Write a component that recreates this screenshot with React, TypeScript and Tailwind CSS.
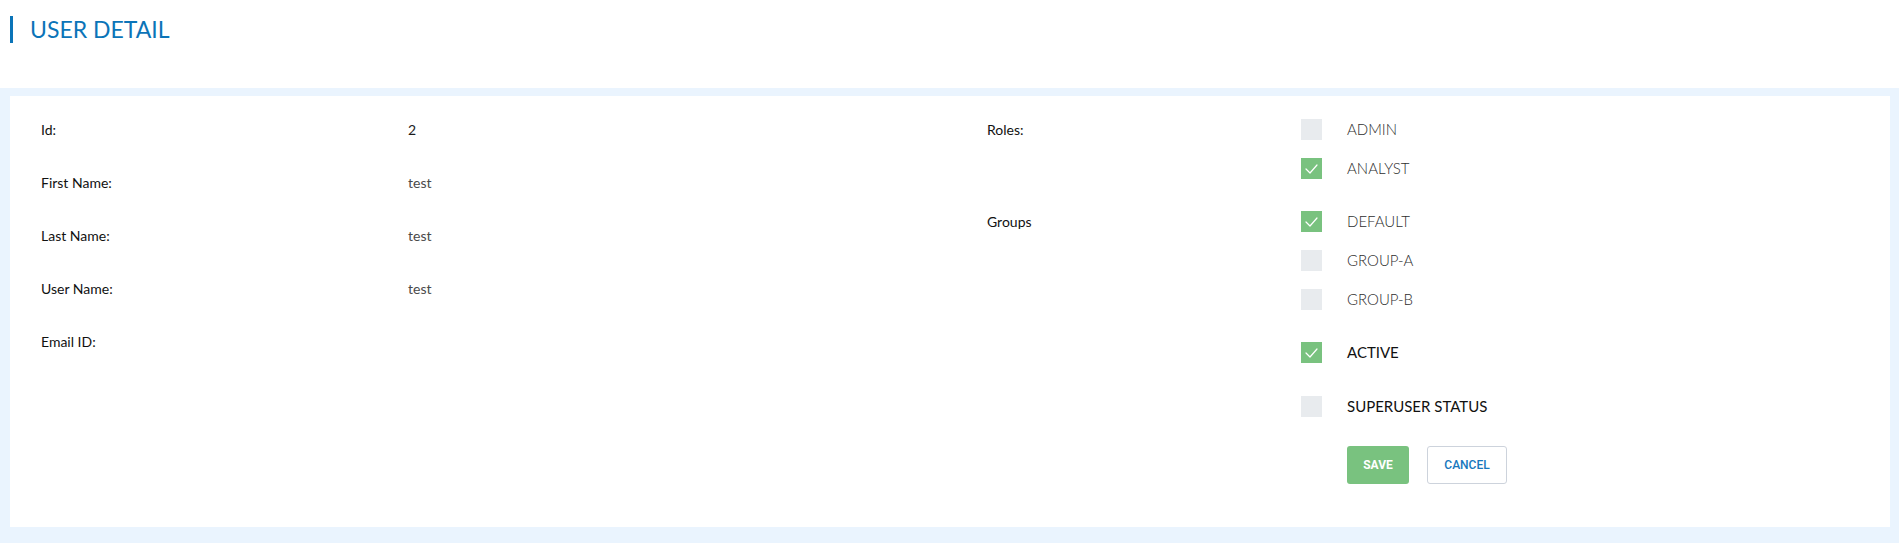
import React from 'react';

type Option = { label: string; checked: boolean };

const roles: Option[] = [
  { label: 'ADMIN', checked: false },
  { label: 'ANALYST', checked: true },
];

const groups: Option[] = [
  { label: 'DEFAULT', checked: true },
  { label: 'GROUP-A', checked: false },
  { label: 'GROUP-B', checked: false },
];

const fields = [
  { label: 'Id:', value: '2', dark: true },
  { label: 'First Name:', value: 'test' },
  { label: 'Last Name:', value: 'test' },
  { label: 'User Name:', value: 'test' },
  { label: 'Email ID:', value: '' },
];

const Box: React.FC<{ checked: boolean }> = ({ checked }) => (
  <span
    className={
      checked
        ? 'w-[21px] h-[21px] bg-[#79c27f] flex items-center justify-center shrink-0'
        : 'w-[21px] h-[21px] bg-[#e8ebee] shrink-0'
    }
  >
    {checked && (
      <svg width="21" height="21" viewBox="0 0 21 21" fill="none">
        <polyline points="5,11 9,15 16,7" stroke="#fff" strokeWidth="1.2" strokeLinecap="round" strokeLinejoin="round" />
      </svg>
    )}
  </span>
);

const CheckRow: React.FC<{ opt: Option; strong?: boolean }> = ({ opt, strong }) => (
  <div className="flex items-center h-[21px]">
    <Box checked={opt.checked} />
    <span
      className={
        strong
          ? 'ml-[25px] text-[15px] font-normal text-[#111] leading-none'
          : 'ml-[25px] text-[15px] font-light text-[#2e2e2e] leading-none'
      }
    >
      {opt.label}
    </span>
  </div>
);

const OptionGroup: React.FC<{ title: string; items: Option[] }> = ({ title, items }) => (
  <div className="flex">
    <div className="w-[314px] h-[21px] flex items-center text-[14px] text-[#111]">{title}</div>
    <div className="flex flex-col gap-[18px]">
      {items.map((o) => (
        <CheckRow key={o.label} opt={o} />
      ))}
    </div>
  </div>
);

export default function App() {
  return (
    <div className="min-h-screen bg-white" style={{ fontFamily: 'Lato, "Noto Sans", sans-serif' }}>
      {/* Header */}
      <div className="h-[88px] pt-4 pl-[10px]">
        <div className="flex items-center h-[27px]">
          <div className="w-[3px] h-[27px] bg-[#0b74b8]" />
          <h1 className="ml-[17px] text-[23px] text-[#0b74b8] leading-none">USER DETAIL</h1>
        </div>
      </div>

      {/* Content band */}
      <div className="bg-[#eaf4fe] pt-2 pl-[10px] pr-[9px] pb-4">
        <div className="bg-white pt-[23px] pb-[43px] pl-[31px] flex">
          {/* Left fields */}
          <div className="w-[946px] flex flex-col gap-[34px]">
            {fields.map((f) => (
              <div key={f.label} className="flex h-5 items-center -mt-px first:mt-0">
                <div className="w-[367px] text-[14px] text-[#111]">{f.label}</div>
                <div className={f.dark ? 'text-[14px] text-[#1c1c1c]' : 'text-[14px] text-[#4a4a4a]'}>{f.value}</div>
              </div>
            ))}
          </div>

          {/* Right options */}
          <div className="flex flex-col">
            <OptionGroup title="Roles:" items={roles} />
            <div className="mt-[32px]">
              <OptionGroup title="Groups" items={groups} />
            </div>
            <div className="mt-[32px] pl-[314px]">
              <CheckRow opt={{ label: 'ACTIVE', checked: true }} strong />
            </div>
            <div className="mt-[33px] pl-[314px]">
              <CheckRow opt={{ label: 'SUPERUSER STATUS', checked: false }} strong />
            </div>
            <div className="mt-[29px] pl-[360px] flex gap-[18px]">
              <button
                className="w-[62px] h-[38px] rounded-[3px] bg-[#79c27f] text-white text-[12px] font-bold"
                style={{ fontFamily: 'Roboto, sans-serif' }}
              >
                SAVE
              </button>
              <button
                className="w-[80px] h-[38px] rounded-[3px] border border-[#cdd3dc] bg-white text-[#1677bd] text-[12px] font-medium"
                style={{ fontFamily: 'Roboto, sans-serif' }}
              >
                CANCEL
              </button>
            </div>
          </div>
        </div>
      </div>
    </div>
  );
}
